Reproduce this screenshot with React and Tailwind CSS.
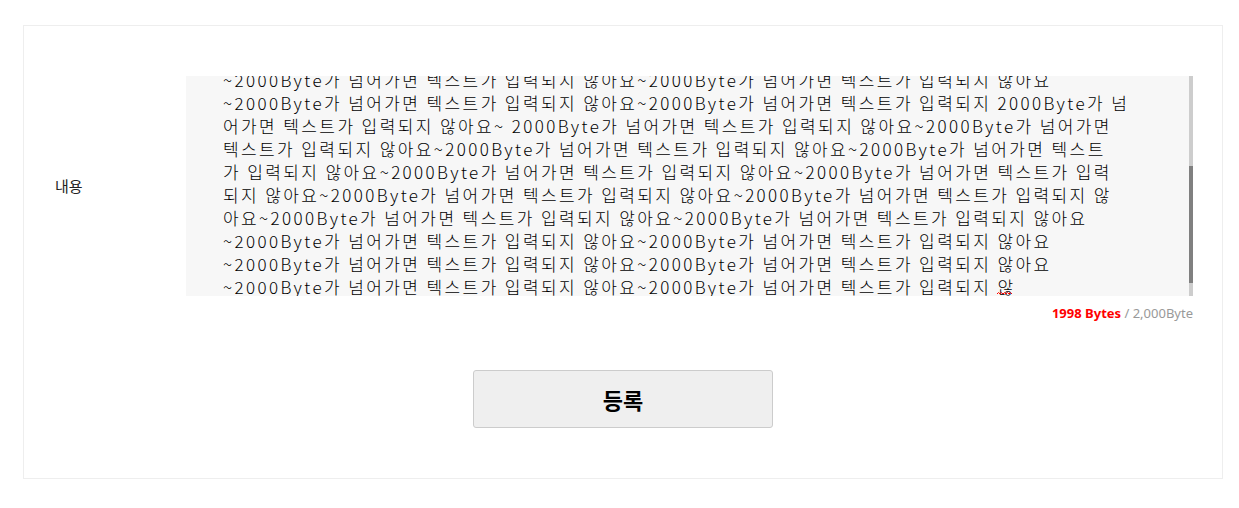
import React from "react";

const A = "~2000Byte가 넘어가면 텍스트가 입력되지 않아요";

const lines = [
  `${A}${A}`,
  `${A}~2000Byte가 넘어가면 텍스트가 입력되지 2000Byte가 넘`,
  "어가면 텍스트가 입력되지 않아요~ 2000Byte가 넘어가면 텍스트가 입력되지 않아요~2000Byte가 넘어가면",
  "텍스트가 입력되지 않아요~2000Byte가 넘어가면 텍스트가 입력되지 않아요~2000Byte가 넘어가면 텍스트",
  "가 입력되지 않아요~2000Byte가 넘어가면 텍스트가 입력되지 않아요~2000Byte가 넘어가면 텍스트가 입력",
  "되지 않아요~2000Byte가 넘어가면 텍스트가 입력되지 않아요~2000Byte가 넘어가면 텍스트가 입력되지 않",
  "아요~2000Byte가 넘어가면 텍스트가 입력되지 않아요~2000Byte가 넘어가면 텍스트가 입력되지 않아요",
  `${A}${A}`,
  `${A}${A}`,
];

export default function App() {
  return (
    <div className="min-h-[508px] bg-white pt-[25px] pl-[23px]">
      <div className="w-[1200px] border border-[#eeeeee] bg-white pt-[50px] pb-[50px]">
        <div className="flex items-center">
          <div className="w-[162px] pl-[31px] text-[15px] leading-[20px] text-[#222] [font-family:'Noto_Sans_CJK_KR','Noto_Sans',sans-serif]">
            내용
          </div>
          <div className="flex-1 mr-[29px] flex h-[220px] bg-[#f7f7f7]">
            <div className="flex-1 overflow-hidden">
              <div className="-mt-[8px] pl-[37px] text-[17px] leading-[23px] tracking-[2.4px] font-light text-black whitespace-pre [font-family:'Noto_Sans_CJK_KR',sans-serif]">
                {lines.map((l, i) => (
                  <div key={i}>{l}</div>
                ))}
                <div>
                  ~2000Byte가 넘어가면 텍스트가 입력되지 않아요~2000Byte가 넘어가면 텍스트가 입력되지{" "}
                  <span className="relative inline-block">
                    않
                    <svg
                      className="absolute left-0 bottom-[3px]"
                      width="16"
                      height="3"
                      viewBox="0 0 16 3"
                    >
                      <path
                        d="M0 2 L1.5 0.5 L3 2 L4.5 0.5 L6 2 L7.5 0.5 L9 2 L10.5 0.5 L12 2 L13.5 0.5 L15 2"
                        fill="none"
                        stroke="#ff0000"
                        strokeWidth="1"
                      />
                    </svg>
                  </span>
                </div>
              </div>
            </div>
            <div className="w-[4px] bg-[#cdcdcd] flex flex-col">
              <div className="h-[90px]" />
              <div className="h-[117px] bg-[#808080]" />
            </div>
          </div>
        </div>
        <div className="mt-[8px] mr-[29px] text-right text-[13px] leading-[18px] [font-family:'Noto_Sans','Open_Sans',sans-serif]">
          <span className="font-bold text-[#ff0000]">1998 Bytes</span>
          <span className="text-[#999999]"> / 2,000Byte</span>
        </div>
        <div className="mt-[48px] flex justify-center">
          <button className="w-[300px] h-[58px] rounded-[3px] border border-[#cccccc] bg-[#efefef] text-[22px] font-bold text-black [font-family:'Noto_Sans_CJK_KR',sans-serif]">
            등록
          </button>
        </div>
      </div>
    </div>
  );
}
